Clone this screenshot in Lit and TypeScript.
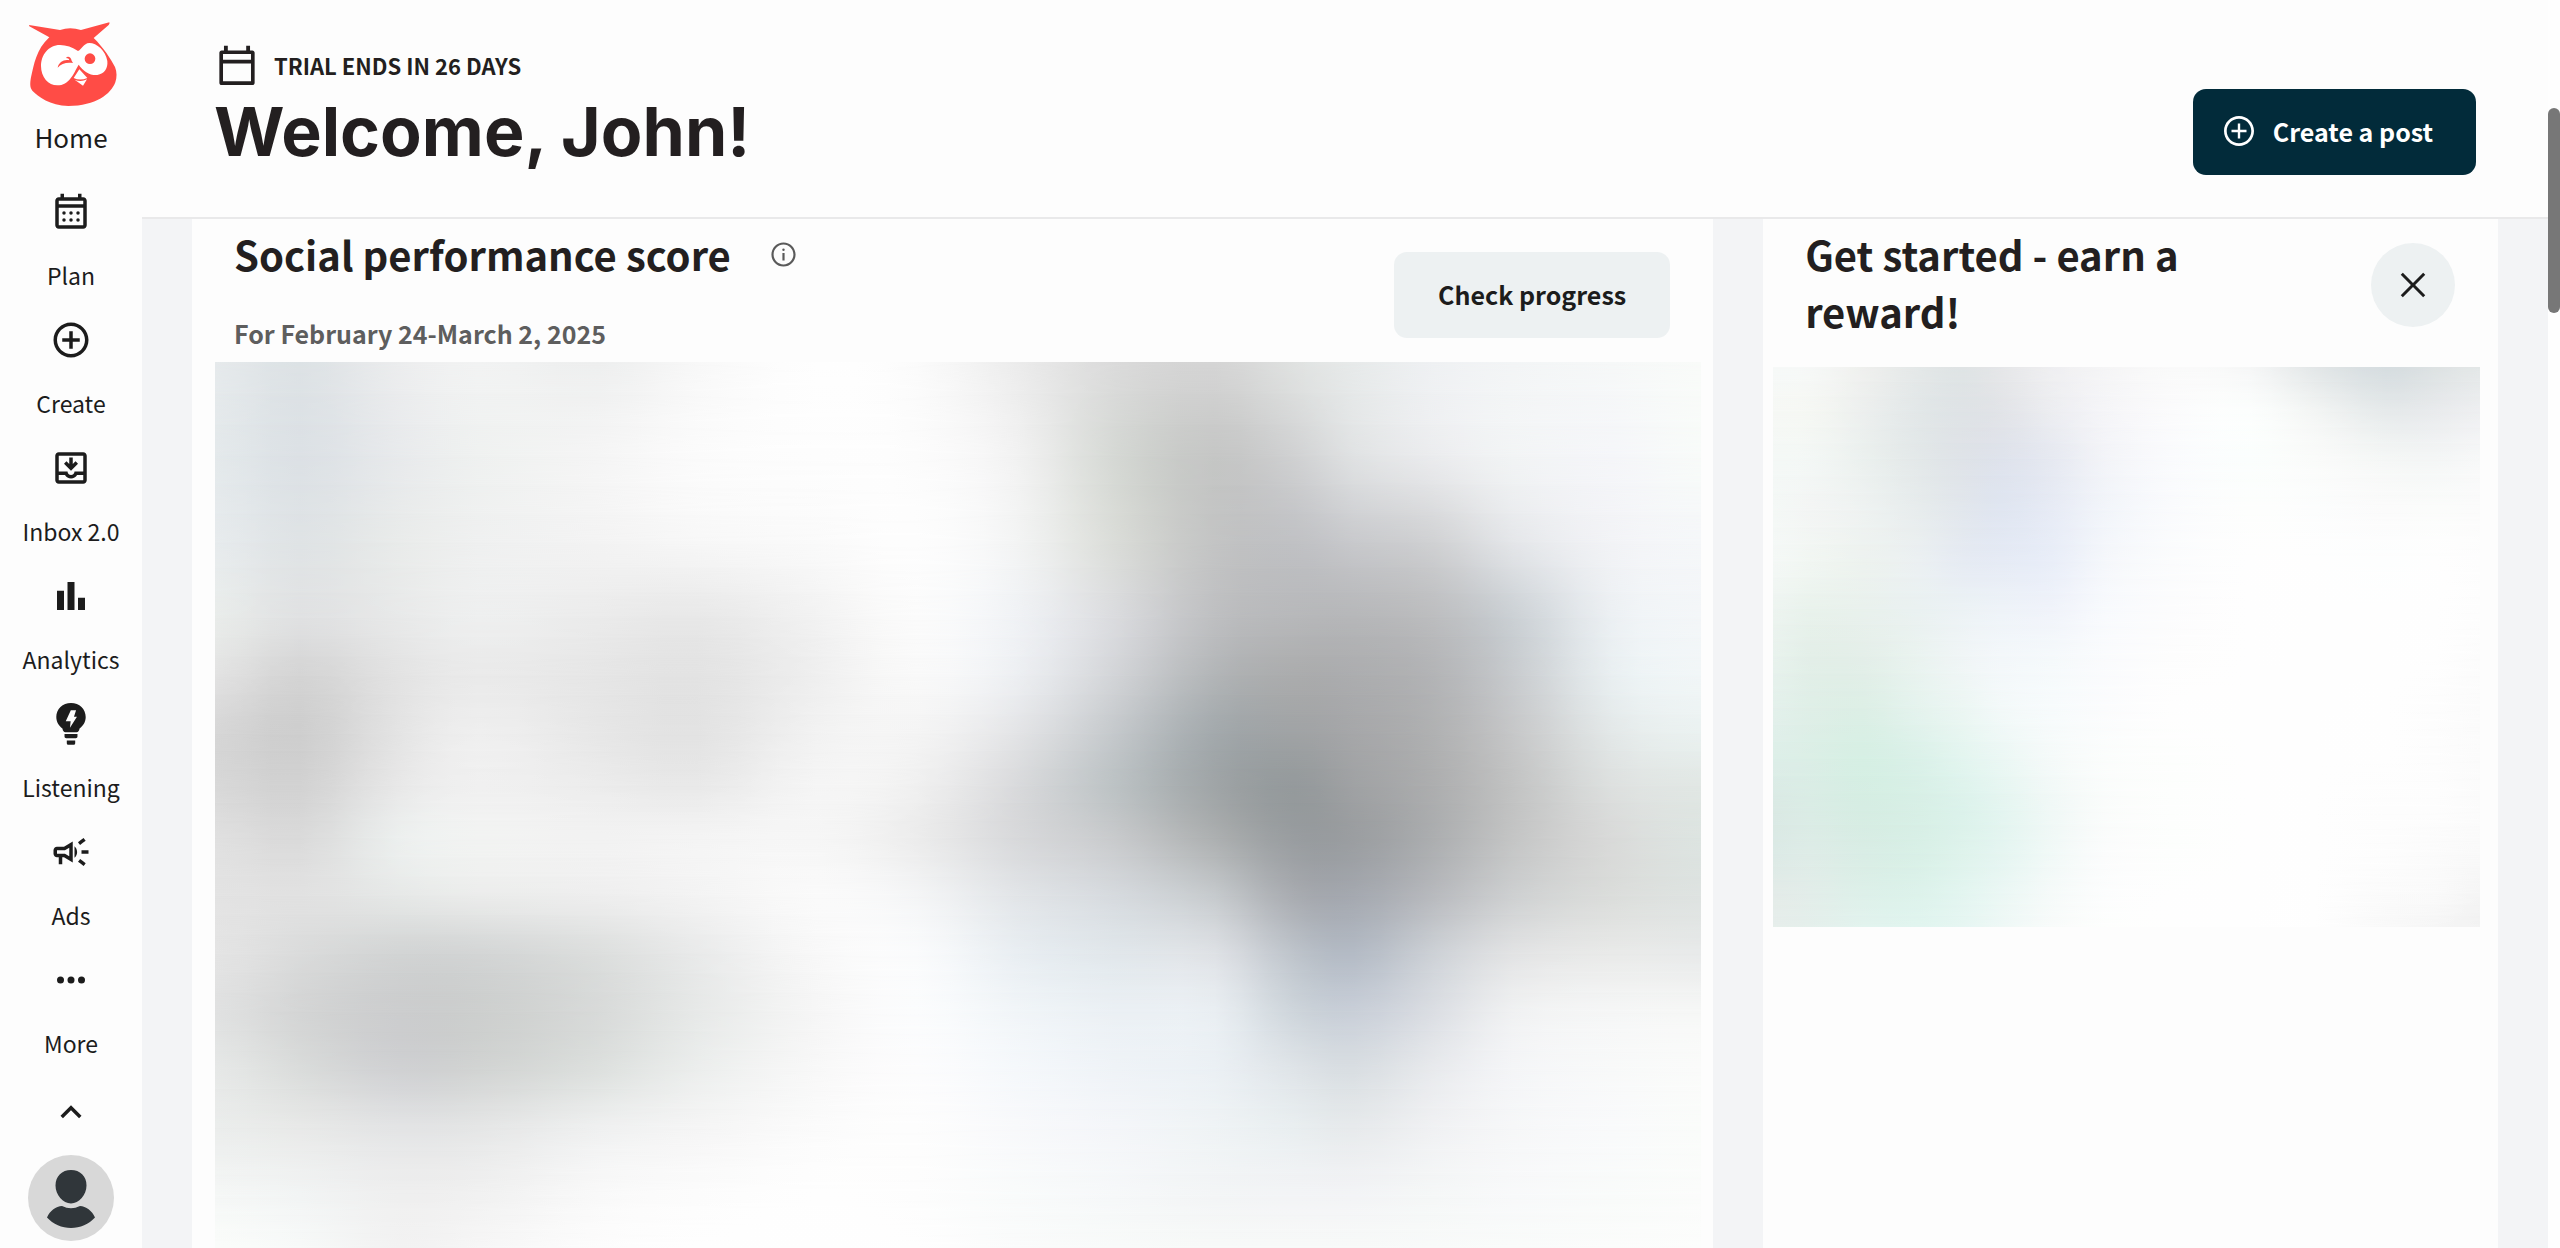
import { LitElement, html, css, svg, type TemplateResult } from "lit";
import { customElement, property } from "lit/decorators.js";

const icons: Record<string, TemplateResult> = {
  plan: svg`<path d="M19 3.600h-1v-2h-2v2H8v-2H6v2H5c-1.100 0-2 .9-2 2v14c0 1.100.9 2 2 2h14c1.100 0 2-.9 2-2v-14c0-1.100-.9-2-2-2zm0 16H5v-10h14v10zm0-12H5v-2h14v2z"/><circle cx="8" cy="12.600" r="1"/><circle cx="12" cy="12.600" r="1"/><circle cx="16" cy="12.600" r="1"/><circle cx="8" cy="16.600" r="1"/><circle cx="12" cy="16.600" r="1"/><circle cx="16" cy="16.600" r="1"/>`,
  calendar: svg`<path d="M20 4.400h-1.200V2h-2v2.400H7.200V2h-2v2.400H4c-.7 0-1.200.5-1.200 1.200v15.600c0 .7.5 1.200 1.200 1.200h16c.7 0 1.200-.5 1.200-1.200V5.600c0-.7-.5-1.200-1.200-1.200zm-.7 16.100H4.700V11.200h14.600v9.300zm0-11.200H4.700V6.200h14.600v3.100z"/>`,
  create: svg`<path d="M13 7h-2v4H7v2h4v4h2v-4h4v-2h-4V7zm-1-5C6.480 2 2 6.480 2 12s4.480 10 10 10 10-4.480 10-10S17.520 2 12 2zm0 18c-4.410 0-8-3.590-8-8s3.590-8 8-8 8 3.590 8 8-3.590 8-8 8z"/>`,
  post: svg`<path d="M12.800 7h-1.600v4.200H7v1.600h4.200V17h1.600v-4.200H17v-1.600h-4.200V7zM12 2C6.480 2 2 6.480 2 12s4.480 10 10 10 10-4.480 10-10S17.520 2 12 2zm0 18.200c-4.520 0-8.200-3.680-8.200-8.200S7.480 3.800 12 3.800s8.200 3.680 8.200 8.200-3.680 8.200-8.200 8.200z"/>`,
  inbox: svg`<path d="M19 3H5c-1.100 0-2 .9-2 2v14c0 1.100.9 2 2 2h14c1.100 0 2-.9 2-2V5c0-1.100-.9-2-2-2zm0 16H5v-3h3.560c.69 1.190 1.970 2 3.450 2s2.750-.81 3.450-2H19v3zm0-5h-4.990c0 1.100-.9 2-2 2s-2-.9-2-2H5V5h14v9z"/><path d="M16 9.500l-1.400-1.400-1.600 1.600V6h-2v3.700L9.400 8.100 8 9.500l4 4z"/>`,
  analytics: svg`<path d="M4 9h4v11H4zM10 4h4v16h-4zM16 13h4v7h-4z"/>`,
  listening: svg`<path fill-rule="evenodd" d="M12 0C7.200 0 3.600 3.500 3.600 8c0 2.900 1.500 5.200 3.500 6.500.3 1.400.8 2.200 1.700 2.200h6.400c.9 0 1.400-.8 1.700-2.200 2-1.300 3.500-3.600 3.500-6.500 0-4.500-3.600-8-8.400-8zm-.1 4.200h3L13.700 7.800h1.700l-4 6.300.4-3.700H9z"/><path d="M8.300 17.700h7.400v1.500c0 .6-.4 1-1 1H9.300c-.6 0-1-.4-1-1zM9.600 21.400h4.800v1.600c0 .5-.3.9-.8.9h-3.200c-.5 0-.8-.4-.8-.9z"/>`,
  ads: svg`<path d="M18 11v2h4v-2h-4zm-2 6.610c.96.710 2.210 1.650 3.200 2.390.4-.53.8-1.070 1.200-1.600-.99-.74-2.240-1.680-3.200-2.400-.4.540-.8 1.080-1.200 1.610zM20.400 5.600c-.4-.53-.8-1.070-1.200-1.600-.99.740-2.240 1.680-3.200 2.400.4.530.8 1.070 1.200 1.600.96-.72 2.210-1.650 3.200-2.400zM4 9c-1.100 0-2 .9-2 2v2c0 1.100.9 2 2 2h1v4h2v-4h1l5 3V6L8 9H4zm5.030 1.710L11 9.530v4.940l-1.970-1.180-.48-.29H4v-2h4.550l.48-.29zM15.500 12c0-1.330-.58-2.530-1.500-3.350v6.690c.92-.81 1.500-2.010 1.500-3.340z"/>`,
  more: svg`<circle cx="6" cy="12" r="2"/><circle cx="12" cy="12" r="2"/><circle cx="18" cy="12" r="2"/>`,
  collapse: svg`<path d="M12 8.200l-6 6 1.400 1.400 4.600-4.600 4.600 4.600 1.400-1.400z"/>`,
  info: svg`<path d="M11.100 10.700h1.800V17h-1.800zM12 2C6.500 2 2 6.500 2 12s4.500 10 10 10 10-4.500 10-10S17.500 2 12 2zm0 18.200c-4.500 0-8.200-3.700-8.200-8.200S7.500 3.800 12 3.800s8.200 3.700 8.200 8.200-3.700 8.200-8.200 8.200z"/><circle cx="12" cy="8" r="1"/>`,
  close: svg`<path d="M19 6.200L17.800 5 12 10.800 6.200 5 5 6.200l5.800 5.800L5 17.800 6.200 19l5.800-5.800 5.800 5.800 1.200-1.200-5.800-5.800z"/>`,
};

const icon = (name: string) =>
  html`<svg class="icon icon-${name}" viewBox="0 0 24 24" aria-hidden="true">${icons[name]}</svg>`;

interface Mesh {
  xs: number[];
  ys: number[];
  rows: string[];
}

/* Colour fields: one colour per (x, y) node, blended smoothly between nodes. */
const scoreMesh: Mesh = {
  xs: [35, 120, 220, 300, 420, 520, 640, 740, 840, 940, 1040, 1120, 1180, 1260, 1340, 1440, 1529],
  ys: [38, 200, 350, 480, 580, 680, 770, 860, 960, 1060, 1160, 1260, 1360, 1480, 1568],
  rows: [
    "e6eaec dde2e5 ecedee f2f3f3 eeefef f8f8f8 fefefe fbfbfb ececec dbdbdb d5d5d5 e0e2e1 e7eaea eff1f3 f3f5f6 f6f8f8 f9fbf9",
    "e4e9eb dce1e5 e8eaec eff1f0 f5f5f5 fbfbfb fdfdfd fcfcfc f2f2f2 d5d8d4 c5c6c5 d0d1d2 e0e2e3 ebecee f2f4f5 f5f6f9 f8fbf9",
    "e7ebed dfe3e5 e9ebea eff0f0 f3f3f3 f7f7f7 fafafa fdfdfd f3f4f4 dadcd8 c3c4c4 c0c1c4 c8c9cc d0d1d3 e4e6e9 f2f3f6 f5f7f9",
    "e9ecea e0e1e2 e8e9e9 eeefef ebebeb e8e8e8 f2f2f2 fbfbfb f0f2f5 dadbde bebfc1 b7b8ba b6b7b9 bcbdbf cbd0d4 ecf0f3 f3f6f8",
    "e2e2e2 d4d4d4 e3e3e3 eaeaea e6e6e6 e3e3e3 efefef f9f9f9 edeff2 d2d4d7 b2b5b7 abacad acadaf b3b4b6 c8cbce e9eff1 f1f6f7",
    "d6d6d6 cecece e4e4e4 efefef e7e7e7 e3e3e3 f2f2f2 f4f4f4 e3e4e6 c4c8cb a3a9ac a0a3a5 a6a7a9 b0b1b2 c6c7c8 e3e8e8 eaf1f0",
    "d8d8d8 d2d2d2 e8e8e8 f0f0f0 ececec e9e9e9 f5f5f5 f0f0f0 d9dadc bcc2c4 a0a5a7 959a9c a0a2a4 adaeaf c2c3c3 dde0df e1e7e4",
    "e0e0e0 dadada ecefee f2f3f2 f2f2f2 f4f4f4 f6f6f6 ececec d8d9db c8cacc adb0b1 999da0 9b9ea1 acaeb0 c4c5c5 d9dad9 dde4e1",
    "e3e3e3 e1e1e1 e6e8e7 ebeceb eeeeee f3f3f3 fafafa f4f5f6 e2e5e8 d6dade c6cacd a9acb1 a5a9b0 b8babe ced0d1 dbdddb dee3e1",
    "e4e4e4 dadbdb d2d4d4 d3d5d5 dcdedd e9eaea f8f8f8 fafbfc e9eef2 e1e7eb dee1e5 bec4cb b4bbc5 cdd1d6 e2e3e4 e9eae9 e8eaea",
    "e0e1e1 d4d5d5 cccdce cdcfce d8dad9 e7e9e8 f6f6f6 fbfcfd f1f5f8 ebf0f4 e9eef2 ced5db c9cfd8 dbdee3 f0f1f2 f5f6f6 f6f7f6",
    "e6e8e7 dadcdb d0d1d3 d2d4d3 dde0de eceeed f8f8f8 fcfcfd f5f8fb eff3f7 ebf0f4 dfe4e8 d9dee2 e8eaed f4f5f7 f8f9f9 fafbfa",
    "ebedec e8e9e8 e3e4e5 e5e6e6 eff0f0 f5f5f5 fbfbfb fdfdfd f8f9fb f4f6f9 eff3f5 e9eef0 e7eaec f0f1f3 f6f7f8 f9fafb fafcfa",
    "f5f7f6 f2f4f4 efefef f1f1f1 f9f9f9 fcfcfc fefefe fdfdfd f9fbfb f6f8f9 f3f5f6 f3f4f6 f3f4f6 f5f7f7 f8f9fa f9fbfa fbfcfb",
    "fafcfa f7f9f8 f2f2f2 f6f6f6 fcfcfc fefefe fefefe fefefe fafbfb f8faf9 f7f9f8 f7f9f8 f7f9f8 f8faf9 f9fbfa fbfcfb fcfdfc",
  ],
};

const rewardMesh: Mesh = {
  xs: [133, 200, 300, 400, 480, 550, 640, 740, 860, 1000, 1120, 1250, 1340, 1422],
  ys: [67, 180, 300, 430, 560, 680, 800, 930, 1060, 1190, 1300, 1400, 1485],
  rows: [
    "f6f9f8 f6f8f7 eff0ee e4e8e8 dfe4e5 e6e7e9 efeff1 f5f5f6 fafafa f6f7f7 e3e7e8 d6dde0 dde2e3 e4e8e8",
    "f6f8f5 f5f7f3 ecefee e2e7e8 dfe3e6 e2e4e8 ecedf1 f5f5f8 fbfbfc fcfefd f3f5f4 e6eaeb e9ebed eeeff1",
    "f4f8f6 f3f7f5 ebf0ee e3e8e9 dfe3e8 dfe3ec e6e9f1 f3f4f8 fafbfd fbfefd fafbfa f5f7f6 f4f6f6 f7f8f8",
    "f4f8f6 f3f5f4 eef2f1 e7eced e2e7ed e0e6f1 e7ebf5 f2f5fa fafbfd fdfefd fcfdfd fbfbfb fbfcfb fbfbfb",
    "f4f8f6 f1f6f2 edf2ef ebf0f2 e6ebf3 e6ebf5 e9eef8 f5f7fb fbfcfd fefefe fefefe fdfefe fefefe fdfdfd",
    "edf4f0 e9f2ec e9f1ed eaf1f1 ecf2f5 eef3f8 f0f3fa f8fafd fcfcfd fefefe fefefe fefefe fefefe fdfdfd",
    "e8f2ed e3efe8 e4efe9 eaf3f0 f0f5f6 f3f7fa f5f9fb fafbfd fdfdfd fefefe fefefe fefefe fefefe fcfcfc",
    "e3f0eb dfefe7 ddefe6 e5f3ee ecf6f3 f3f9f9 f7fbfc fbfcfd fefefe fefefe fefefe fefefe fdfdfd fbfbfb",
    "ddeee8 dbeee6 d6efe4 dbf1e9 e3f5ef ebf7f4 f5faf9 fbfdfc fdfefd fefefe fefefe fefefe fdfdfd fbfbfb",
    "dae9e4 daece5 d6ede3 d8efe6 dcf2eb e4f5f0 f0f8f6 fafcfb fdfefd fefefe fefefe fdfdfd fdfdfd fbfbfb",
    "dceae6 deece7 d9ede5 d9f0e7 dff3ec e5f5f1 f1f9f7 fbfcfc fdfefd fefefe fefefe fdfdfd fbfbfb f9f9f9",
    "e3ebe8 e2ede9 ddf0e9 ddf2eb e3f5f0 ebf7f4 f5faf9 fcfdfd fefefe fefefe fefefe fbfbfb fafafa f5f5f5",
    "e6eeeb e4efeb e2f3ee e1f5ef e6f6f2 eef8f6 f8fbfa fdfefd fefefe fefefe fefefe f9f9f9 f6f6f6 f2f2f2",
  ],
};

const STEPS = 3;

const share = (value: number, list: number[]) =>
  (((value - list[0]) / (list[list.length - 1] - list[0])) * 100).toFixed(2);

const curve = (a: number, b: number, c: number, d: number, t: number) =>
  b + 0.5 * t * (c - a + t * (2 * a - 5 * b + 4 * c - d + t * (3 * (b - c) + d - a)));

/* Inserts STEPS - 1 points between neighbours. */
const densify = <T,>(list: T[], blend: (a: T, b: T, c: T, d: T, t: number) => T): T[] => {
  const at = (i: number) => list[Math.max(0, Math.min(list.length - 1, i))];
  const out: T[] = [];
  for (let i = 0; i < list.length - 1; i++) {
    for (let s = 0; s < STEPS; s++) {
      out.push(blend(at(i - 1), at(i), at(i + 1), at(i + 2), s / STEPS));
    }
  }
  out.push(list[list.length - 1]);
  return out;
};

const straight = (_a: number, b: number, c: number, _d: number, t: number) => b + (c - b) * t;
const mixColor = (a: number[], b: number[], c: number[], d: number[], t: number) =>
  b.map((_, k) => curve(a[k], b[k], c[k], d[k], t));
const mixRow = (a: number[][], b: number[][], c: number[][], d: number[][], t: number) =>
  b.map((_, k) => mixColor(a[k], b[k], c[k], d[k], t));

@customElement("soft-field")
export class SoftField extends LitElement {
  @property({ attribute: false }) mesh!: Mesh;

  static styles = css`
    :host {
      display: grid;
      overflow: hidden;
    }
    .layer,
    ::slotted(*) {
      grid-area: 1 / 1;
    }
  `;

  render() {
    const xs = densify(this.mesh.xs, straight);
    const ys = densify(this.mesh.ys, straight);
    const colors = this.mesh.rows.map((row) =>
      densify(
        row.split(" ").map((c) => [0, 2, 4].map((k) => parseInt(c.slice(k, k + 2), 16))),
        mixColor,
      ),
    );
    const layers = densify(colors, mixRow).map((row, i) => {
      const stops = row.map((c, j) => `rgb(${c.map((v) => v.toFixed(1)).join(" ")}) ${share(xs[j], xs)}%`);
      const fade = i
        ? `mask-image:linear-gradient(to bottom,transparent ${share(ys[i - 1], ys)}%,#000 ${share(ys[i], ys)}%)`
        : "";
      return html`<div class="layer" style="background:linear-gradient(to right,${stops.join(",")});${fade}"></div>`;
    });
    return html`${layers}<slot></slot>`;
  }
}

@customElement("side-nav")
export class SideNav extends LitElement {
  static styles = css`
    :host {
      display: flex;
      flex-direction: column;
      align-items: center;
      padding-top: 22px;
      background: #fdfdfd;
      color: #1c1c1c;
    }
    .item {
      display: flex;
      flex-direction: column;
      align-items: center;
      box-sizing: border-box;
      height: 128px;
      padding-top: 11px;
      gap: 26px;
      color: inherit;
      text-decoration: none;
      font-size: 23px;
      line-height: 32px;
      white-space: nowrap;
    }
    .home {
      height: 158px;
      padding-top: 0;
      gap: 15px;
      font-size: 26px;
    }
    .logo {
      width: 88px;
      height: 84px;
      margin-left: 3px;
    }
    .icon {
      width: 42px;
      height: 42px;
      fill: currentColor;
    }
    .plain {
      border: 0;
      padding: 0;
      background: none;
      color: inherit;
      line-height: 0;
    }
    .collapse {
      margin: 15px 0 22px;
    }
    .avatar {
      width: 86px;
      height: 86px;
    }
  `;

  private items = [
    ["plan", "Plan"],
    ["create", "Create"],
    ["inbox", "Inbox 2.0"],
    ["analytics", "Analytics"],
    ["listening", "Listening"],
    ["ads", "Ads"],
    ["more", "More"],
  ];

  render() {
    return html`
      <a class="item home" href="#home">
        <svg class="logo" viewBox="87 66 264 252" aria-hidden="true">
          <path fill="#ff4c46" d="M87 75L180 90Q210 80 243 90L328 67Q330 70 326 75L281 114C310 142 333 178 345 201C351 216 351 232 346 247C333 282 288 318 205 318C150 316 114 290 97 272C89 263 90 248 93 232C102 195 108 148 148 112L88 79Z"/>
          <path fill="#fff" d="M234 153C218 141 198 135 180 135C145 135 123 165 123 198C123 232 145 256 172 256C208 256 220 222 236 194C250 214 270 227 292 225C314 221 324 205 322 183C317 152 290 129 268 129C250 130 246 148 234 153Z"/>
          <circle cx="270" cy="176" r="16" fill="#ff4c46"/>
          <path fill="#ff4c46" d="M173 203C176 186 193 177 208 181C207 176 204 174 198 174C203 167 213 171 215 182L219 189C200 186 184 190 173 203Z"/>
          <path fill="#fff" d="M238 208L262 234Q240 243 221 234ZM224 239Q243 247 261 238L249 257Z"/>
        </svg>
        <span>Home</span>
      </a>
      ${this.items.map(([id, label]) => html`<a class="item" href="#${id}">${icon(id)}<span>${label}</span></a>`)}
      <button class="plain collapse" aria-label="Collapse">${icon("collapse")}</button>
      <button class="plain" aria-label="Account">
        <svg class="avatar" viewBox="0 0 86 86" aria-hidden="true">
          <circle cx="43" cy="43" r="43" fill="#d8d8d8"/>
          <path fill="#30363a" d="M43 15c9 0 15.500 6 15.500 15.500C58.500 40 51 48.500 43 48.500S27.500 40 27.500 30.500C27.500 21 34 15 43 15zM19 62.500C22 55.500 28 51.500 34 51Q43 55.500 52 51C58 51.500 64 55.500 67 62.500C61 69 52 73 43 73S25 69 19 62.500Z"/>
        </svg>
      </button>
    `;
  }
}

@customElement("app-root")
export class AppRoot extends LitElement {
  static styles = css`
    :host {
      display: grid;
      grid-template-columns: 142px minmax(0, 1fr) 12px;
      height: 100vh;
      overflow: hidden;
      background: #fefefe;
      color: #231f20;
      font-family: "Noto Sans CJK SC", "Noto Sans", sans-serif;
    }
    .page {
      display: flex;
      flex-direction: column;
      min-width: 0;
      min-height: 0;
      background: #f3f4f6;
    }
    .top {
      display: flex;
      justify-content: space-between;
      align-items: flex-start;
      padding: 42px 72px 42px 72px;
      border-bottom: 2px solid #e9e9ea;
      background: #fdfdfd;
    }
    .trial {
      display: flex;
      align-items: center;
      gap: 14px;
      margin: 0;
      font-size: 22px;
      font-weight: 700;
      line-height: 46px;
    }
    .icon {
      flex: none;
      fill: currentColor;
    }
    .icon-calendar {
      width: 46px;
      height: 46px;
    }
    .icon-post {
      width: 36px;
      height: 36px;
    }
    .icon-info {
      width: 29px;
      height: 29px;
      color: #5a5a5a;
    }
    .icon-close {
      width: 42px;
      height: 42px;
    }
    .welcome {
      margin: 0;
      font-family: Inter, sans-serif;
      font-size: 68px;
      font-weight: 700;
      line-height: 87px;
    }
    .button {
      display: flex;
      align-items: center;
      justify-content: center;
      box-sizing: border-box;
      height: 86px;
      border: 0;
      border-radius: 13px;
      font-family: inherit;
      font-size: 25px;
      font-weight: 700;
      white-space: nowrap;
    }
    .primary {
      gap: 16px;
      margin-top: 47px;
      padding: 0 43px 2px 28px;
      background: #022b3a;
      color: #fff;
    }
    .muted {
      padding: 0 44px 2px;
      background: #edf1f2;
      color: #1c1c1c;
    }
    .cards {
      flex: 1;
      display: grid;
      grid-template-columns: minmax(0, 207fr) minmax(0, 100fr);
      gap: 50px;
      min-height: 0;
      padding: 0 50px;
    }
    .card {
      display: flex;
      flex-direction: column;
      min-height: 0;
      background: #fdfdfd;
    }
    .head {
      display: flex;
      justify-content: space-between;
      box-sizing: border-box;
      padding: 7px 43px 0 42px;
    }
    .score-head {
      height: 143px;
    }
    .reward-head {
      height: 148px;
    }
    .title-row {
      display: flex;
      align-items: center;
      gap: 38px;
    }
    .title {
      margin: 0;
      font-size: 40px;
      font-weight: 700;
      line-height: 57px;
    }
    .period {
      margin: 32px 0 0;
      color: #5e5e5e;
      font-size: 25px;
      font-weight: 700;
      line-height: 36px;
    }
    .score-head .button {
      margin-top: 26px;
    }
    .reward-title {
      max-width: 440px;
    }
    .help,
    .close {
      display: grid;
      place-items: center;
      border: 0;
      padding: 0;
      background: none;
    }
    .close {
      width: 84px;
      height: 84px;
      margin-top: 17px;
      border-radius: 50%;
      background: #edf1f2;
      color: #1c1c1c;
    }
    .score-field {
      flex: 1;
      margin: 0 12px 0 23px;
    }
    .panel-edge {
      align-self: end;
      height: 60px;
      margin: 0 2% 0 51%;
      border: solid rgba(0, 0, 0, 0.02);
      border-width: 0 2px 2px;
      border-radius: 0 0 36px 36px;
    }
    .reward-field {
      aspect-ratio: 707 / 560;
      margin: 0 18px 0 10px;
    }
    .track {
      padding-top: 108px;
    }
    .thumb {
      height: 205px;
      border-radius: 6px;
      background: #777;
    }
  `;

  render() {
    return html`
      <side-nav></side-nav>
      <div class="page">
        <header class="top">
          <div>
            <p class="trial">${icon("calendar")}TRIAL ENDS IN 26 DAYS</p>
            <h1 class="welcome">Welcome, John!</h1>
          </div>
          <button class="button primary">${icon("post")}Create a post</button>
        </header>
        <main class="cards">
          <section class="card">
            <div class="head score-head">
              <div>
                <div class="title-row">
                  <h2 class="title">Social performance score</h2>
                  <button class="help" aria-label="About this score">${icon("info")}</button>
                </div>
                <p class="period">For February 24-March 2, 2025</p>
              </div>
              <button class="button muted">Check progress</button>
            </div>
            <soft-field class="score-field" .mesh=${scoreMesh}><div class="panel-edge"></div></soft-field>
          </section>
          <section class="card">
            <div class="head reward-head">
              <h2 class="title reward-title">Get started - earn a reward!</h2>
              <button class="close" aria-label="Close">${icon("close")}</button>
            </div>
            <soft-field class="reward-field" .mesh=${rewardMesh}></soft-field>
          </section>
        </main>
      </div>
      <div class="track"><div class="thumb"></div></div>
    `;
  }
}
